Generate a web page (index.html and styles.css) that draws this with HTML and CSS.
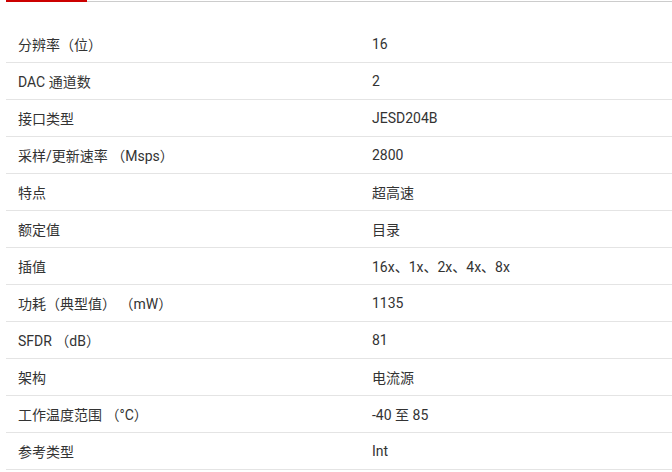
FILE: index.html
```html
<!DOCTYPE html>
<html lang="zh-CN">
<head>
<meta charset="utf-8">
<link rel="stylesheet" href="styles.css">
</head>
<body>
<div class="page">
  <div class="tabs">
    <div class="tab-active"></div>
    <div class="tab-rest"></div>
  </div>
  <div class="params">
    <div class="row"><div class="label">分辨率（位）</div><div class="value">16</div></div>
    <div class="row"><div class="label">DAC 通道数</div><div class="value">2</div></div>
    <div class="row"><div class="label">接口类型</div><div class="value">JESD204B</div></div>
    <div class="row"><div class="label">采样/更新速率 （Msps）</div><div class="value">2800</div></div>
    <div class="row"><div class="label">特点</div><div class="value">超高速</div></div>
    <div class="row"><div class="label">额定值</div><div class="value">目录</div></div>
    <div class="row"><div class="label">插值</div><div class="value">16x、1x、2x、4x、8x</div></div>
    <div class="row"><div class="label">功耗（典型值） （mW）</div><div class="value">1135</div></div>
    <div class="row"><div class="label">SFDR （dB）</div><div class="value">81</div></div>
    <div class="row"><div class="label">架构</div><div class="value">电流源</div></div>
    <div class="row"><div class="label">工作温度范围 （°C）</div><div class="value">-40 至 85</div></div>
    <div class="row"><div class="label">参考类型</div><div class="value">Int</div></div>
  </div>
</div>
</body>
</html>
```
FILE: styles.css
```css
html, body {
  margin: 0;
  padding: 0;
  background: #fff;
}
body {
  font-family: Roboto, "Noto Sans CJK SC", sans-serif;
  font-size: 14px;
  color: #333;
  overflow: hidden;
}
.page {
  padding-left: 6px;
}
.tabs {
  display: flex;
  align-items: flex-end;
  height: 2px;
}
.tab-active {
  width: 81px;
  height: 2px;
  background: #cc0000;
}
.tab-rest {
  flex: 1;
  height: 1px;
  background: #cccccc;
}
.params {
  padding-top: 24px;
}
.row {
  display: grid;
  grid-template-columns: 366px 1fr;
  height: 36px;
  align-items: center;
  border-bottom: 1px solid #e4e4e4;
}
.label {
  padding-left: 12px;
  white-space: nowrap;
}
.value {
  white-space: nowrap;
}
```
